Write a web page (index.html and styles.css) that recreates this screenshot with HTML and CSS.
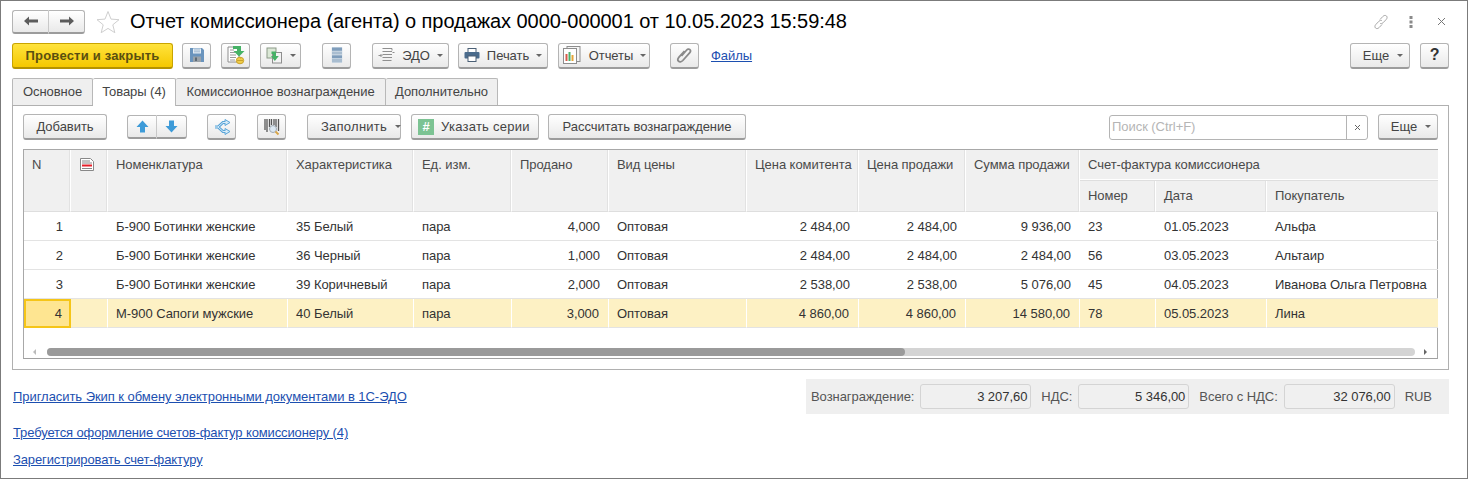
FILE: index.html
```html
<!DOCTYPE html>
<html lang="ru">
<head>
<meta charset="utf-8">
<title>Отчет комиссионера</title>
<link rel="stylesheet" href="styles.css">
</head>
<body>
<div class="window">
  <header class="titlebar">
    <div class="navgroup">
      <button class="btn seg w36"><svg width="16" height="12" viewBox="0 0 16 12"><path d="M1 6l5-4.500V4.600h9v2.800H6v3.100z" fill="#5c5c5c"/></svg></button>
      <button class="btn seg w37"><svg width="16" height="12" viewBox="0 0 16 12"><path d="M15 6l-5-4.500V4.600H1v2.800h9v3.100z" fill="#5c5c5c"/></svg></button>
    </div>
    <svg class="star" width="24" height="24" viewBox="0 0 24 24"><path d="M12 1.500l3 7.600 8 .6-6.200 5.100 2 7.900-6.800-4.300-6.800 4.300 2-7.900L1 9.700l8-.6z" fill="#fff" stroke="#cfcfcf"/></svg>
    <h1 class="title">Отчет комиссионера (агента) о продажах 0000-000001 от 10.05.2023 15:59:48</h1>
    <div class="winicons">
      <svg class="wi-link" width="16" height="16" viewBox="0 0 16 16" fill="none" stroke="#a8a8a8"><path d="M7 5.500l2.800-3c1.300-1.300 2.800-1.400 3.700-.5s.8 2.400-.5 3.700L10 8.800c-1.100 1-2.300 1.100-3 .4"/><path d="M9 10.500l-2.800 3c-1.300 1.300-2.800 1.400-3.700.5s-.8-2.400.5-3.700L6 7.200c1.100-1 2.300-1.100 3-.4"/></svg>
      <svg class="wi-dots" width="4" height="12" viewBox="0 0 4 12" fill="#8a8a8a"><rect x="0.500" y="0" width="3" height="3"/><rect x="0.500" y="4.500" width="3" height="3"/><rect x="0.500" y="9" width="3" height="3"/></svg>
      <svg width="9" height="9" viewBox="0 0 9 9" stroke="#777" fill="none"><path d="M1 1l7 7M8 1l-7 7"/></svg>
    </div>
  </header>

  <div class="cmdbar">
    <button class="btn primary w161">Провести и закрыть</button>
    <button class="btn w29 ml9"><svg width="16" height="16" viewBox="0 0 16 16"><path d="M1 1h12l2 2v12H1z" fill="#6a94bd"/><rect x="4" y="1.500" width="8" height="5" fill="#e3ecf4"/><path d="M5 3h6M5 4.800h6" stroke="#9db7cf"/><rect x="4" y="9.500" width="8" height="5.500" fill="#9aa2a9"/><rect x="6" y="10.500" width="2" height="3.500" fill="#5d6a75"/></svg></button>
    <button class="btn w29 ml10"><svg width="20" height="20" viewBox="0 0 20 20"><path d="M2 2h9l2 2v13H2z" fill="#fff" stroke="#8e8e8e"/><path d="M4 5h4M4 7.500h5M4 10h6M4 12.500h6M4 15h5" stroke="#9a9a9a"/><ellipse cx="14" cy="15.500" rx="3.700" ry="3.300" fill="#f0cd4a" stroke="#c9a22a"/><path d="M14 13h1M11 15.500h6" stroke="#c9a22a"/><path d="M7 1h8v5h3.500l-5.500 5.500L7.500 6H11V4H7z" fill="#46b266"/></svg></button>
    <button class="btn w41 ml10"><svg width="17" height="17" viewBox="0 0 17 17"><rect x="1" y="1" width="9" height="10" fill="#dbe8d6" stroke="#8b9a88"/><rect x="6.500" y="5.500" width="9" height="10.500" fill="#f3f3f3" stroke="#8e8e8e"/><path d="M3.500 3.500H8V8h2.800L6.800 13 3 8h2V6H3.500z" transform="translate(2 1)" fill="#46b266"/></svg><i class="caret"></i></button>
    <button class="btn w29 ml21"><svg width="12" height="18" viewBox="0 0 12 18"><rect x="0.500" y="1" width="11" height="16" rx="1" fill="#dfe7ee"/><rect x="1" y="1.500" width="10" height="3.300" fill="#7f9dbb"/><rect x="1" y="5.500" width="10" height="3" fill="#a9bdd0"/><rect x="1" y="9.300" width="10" height="3" fill="#7f9dbb"/><rect x="1" y="13" width="10" height="3.500" fill="#a9bdd0"/></svg></button>
    <button class="btn w77 ml21"><svg class="ic" width="17" height="16" viewBox="0 0 17 16" fill="none" stroke="#8f8f8f"><path d="M4.500 1.500h9.500v2M4.500 4.500h9.500M4.500 7.500h9.500M4.500 10.500h9.500M4.500 13.500h9"/><path d="M.5 8.500h3M2.500 7L4 8.500 2.500 10M14.500 5.500h2"/></svg>ЭДО<i class="caret"></i></button>
    <button class="btn w90 ml9"><svg class="ic" width="16" height="14" viewBox="0 0 16 14"><rect x="4" y="0.500" width="8" height="4" fill="#fff" stroke="#4a5f75"/><rect x="0.500" y="4" width="15" height="6.500" rx="1" fill="#4a6b8c"/><rect x="4" y="8" width="8" height="5.500" fill="#fff" stroke="#4a5f75"/></svg>Печать<i class="caret"></i></button>
    <button class="btn w92 ml10"><svg class="ic" width="20" height="20" viewBox="0 0 20 20"><rect x="5" y="1.500" width="13" height="15" fill="#f5f5f5" stroke="#8e8e8e"/><rect x="1.500" y="3.500" width="13" height="15" fill="#fff" stroke="#8e8e8e"/><rect x="3.500" y="9" width="2" height="7" fill="#d85a4a"/><rect x="6.500" y="7" width="2" height="9" fill="#4cb06a"/><rect x="9.500" y="10" width="2" height="6" fill="#e5a53a"/></svg>Отчеты<i class="caret"></i></button>
    <button class="btn w29 ml20"><svg width="17" height="18" viewBox="0 0 17 18" fill="none" stroke="#8a8a8a" stroke-width="1.800"><path d="M5.500 10l5.200-6c1-1.100 2.400-1.200 3.200-.4s.7 2.100-.3 3.200l-6.800 7.700c-1.500 1.600-3.300 1.700-4.300.7s-.8-2.600.5-4.100L8.500 5"/></svg></button>
    <a class="link files" href="#">Файлы</a>
    <div class="grow"></div>
    <button class="btn w60 more">Еще<i class="caret"></i></button>
    <button class="btn w29 ml10 help">?</button>
  </div>

  <nav class="tabs">
    <div class="tab t80">Основное</div>
    <div class="tab active t83">Товары (4)</div>
    <div class="tab t210">Комиссионное вознаграждение</div>
    <div class="tab t113">Дополнительно</div>
  </nav>

  <section class="panel">
    <div class="toolbar">
      <button class="btn w84">Добавить</button>
      <div class="navgroup ml20">
        <button class="btn seg w30"><svg width="13" height="13" viewBox="0 0 13 13"><path d="M6.500 0.500L12.500 7H9v5.500H4V7H.5z" fill="#3e9bd8"/></svg></button>
        <button class="btn seg w30"><svg width="13" height="13" viewBox="0 0 13 13"><path d="M6.500 12.500L12.500 6H9V.5H4V6H.5z" fill="#3e9bd8"/></svg></button>
      </div>
      <button class="btn w29 ml20"><svg width="18" height="16" viewBox="0 0 18 16" fill="none"><path d="M2 8h3l5-4.500h3M5 8l5 4.500h3" stroke="#5aa5d8" stroke-width="3"/><path d="M12 .5l5 3-5 3zM12 9.500l5 3-5 3z" fill="#d6ebf8" stroke="#5aa5d8"/><path d="M2 8h3l5-4.500h3M5 8l5 4.500h3" stroke="#d6ebf8"/></svg></button>
      <button class="btn w29 ml21"><svg width="16" height="18" viewBox="0 0 16 18"><path d="M1 1v11M3 1v13M5.500 1v8M7.500 1v6M10 1v6M12 1v8M14.500 1v12" stroke="#555" stroke-width="1.300"/><circle cx="9" cy="11" r="3.500" fill="#dce8f2" stroke="#9fa9b2"/><path d="M11.500 13.500l3 3" stroke="#d8a64a" stroke-width="2"/></svg></button>
      <button class="btn w94 ml21 start fill">Заполнить<i class="caret"></i></button>
      <button class="btn w128 ml10 start series"><span class="hash">#</span>Указать серии</button>
      <button class="btn w198 ml9">Рассчитать вознаграждение</button>
      <div class="grow"></div>
      <div class="search"><span class="search-input">Поиск (Ctrl+F)</span><span class="search-x"><svg width="7" height="7" viewBox="0 0 7 7" stroke="#666" fill="none"><path d="M1 1l5 5M6 1L1 6"/></svg></span></div>
      <button class="btn w60 more ml10">Еще<i class="caret"></i></button>
    </div>

    <div class="grid-wrap">
      <table class="grid">
        <colgroup>
          <col class="c1"><col class="c2"><col class="c3"><col class="c4"><col class="c5"><col class="c6"><col class="c7"><col class="c8"><col class="c9"><col class="c10"><col class="c11"><col class="c12"><col class="c13">
        </colgroup>
        <thead>
          <tr class="h1">
            <th rowspan="2">N</th>
            <th rowspan="2"><svg class="doc" width="14" height="13" viewBox="0 0 14 13"><path d="M.5.5h10l3 3v9H.5z" fill="#fff" stroke="#888"/><path d="M2 3h8M2 5h10M2 10.500h10" stroke="#888"/><rect x="2" y="6.500" width="10" height="2" fill="#e6202a"/></svg></th>
            <th rowspan="2">Номенклатура</th>
            <th rowspan="2">Характеристика</th>
            <th rowspan="2">Ед. изм.</th>
            <th rowspan="2">Продано</th>
            <th rowspan="2">Вид цены</th>
            <th rowspan="2">Цена комитента</th>
            <th rowspan="2">Цена продажи</th>
            <th rowspan="2">Сумма продажи</th>
            <th colspan="3" class="group">Счет-фактура комиссионера</th>
          </tr>
          <tr class="h2"><th>Номер</th><th>Дата</th><th>Покупатель</th></tr>
        </thead>
        <tbody>
          <tr><td class="r">1</td><td></td><td>Б-900 Ботинки женские</td><td>35 Белый</td><td>пара</td><td class="r">4,000</td><td>Оптовая</td><td class="r">2 484,00</td><td class="r">2 484,00</td><td class="r">9 936,00</td><td>23</td><td>01.05.2023</td><td>Альфа</td></tr>
          <tr><td class="r">2</td><td></td><td>Б-900 Ботинки женские</td><td>36 Черный</td><td>пара</td><td class="r">1,000</td><td>Оптовая</td><td class="r">2 484,00</td><td class="r">2 484,00</td><td class="r">2 484,00</td><td>56</td><td>03.05.2023</td><td>Альтаир</td></tr>
          <tr><td class="r">3</td><td></td><td>Б-900 Ботинки женские</td><td>39 Коричневый</td><td>пара</td><td class="r">2,000</td><td>Оптовая</td><td class="r">2 538,00</td><td class="r">2 538,00</td><td class="r">5 076,00</td><td>45</td><td>04.05.2023</td><td>Иванова Ольга Петровна</td></tr>
          <tr class="sel"><td class="r cur">4</td><td></td><td>М-900 Сапоги мужские</td><td>40 Белый</td><td>пара</td><td class="r">3,000</td><td>Оптовая</td><td class="r">4 860,00</td><td class="r">4 860,00</td><td class="r">14 580,00</td><td>78</td><td>05.05.2023</td><td>Лина</td></tr>
        </tbody>
      </table>
      <div class="hscroll">
        <i class="arr-l"></i>
        <div class="track"><div class="thumb"></div></div>
        <i class="arr-r"></i>
      </div>
    </div>
  </section>

  <footer class="bottom">
    <div class="bottom-row">
      <a class="link" href="#">Пригласить Экип к обмену электронными документами в 1С-ЭДО</a>
      <div class="totals">
        <span class="lbl">Вознаграждение:</span><span class="field">3 207,60</span>
        <span class="lbl">НДС:</span><span class="field">5 346,00</span>
        <span class="lbl">Всего с НДС:</span><span class="field">32 076,00</span>
        <span class="lbl">RUB</span>
      </div>
    </div>
    <a class="link l2" href="#">Требуется оформление счетов-фактур комиссионеру (4)</a>
    <a class="link l3" href="#">Зарегистрировать счет-фактуру</a>
  </footer>
</div>
</body>
</html>
```

FILE: styles.css
```css
* { box-sizing: border-box; }
html, body { margin: 0; padding: 0; background: #fff; }
body { font-family: "Liberation Sans", Arial, sans-serif; font-size: 13px; color: #333; letter-spacing: -0.05px; }
.window { width: 1468px; height: 479px; border: 1px solid #7b7b7b; padding: 0 18px 0 11px; overflow: hidden; }

.titlebar { display: flex; align-items: center; height: 40px; padding-top: 1px; }
.navgroup { display: flex; }
.star { margin-left: 11px; }
.title { font-size: 20px; font-weight: 400; color: #000; margin: 0 0 0 10px; letter-spacing: -0.06px; white-space: nowrap; }
.winicons { margin-left: auto; display: flex; align-items: center; margin-right: 3px; }
.wi-link { margin-right: 20px; }
.wi-dots { margin-right: 24px; }

.btn { font: inherit; letter-spacing: inherit; color: #444; height: 26px; border: 1px solid #b4b4b4; border-bottom: 2px solid #9c9c9c; border-radius: 3px; background: linear-gradient(#fff, #e9e9e9); display: inline-flex; align-items: center; justify-content: center; padding: 0; flex: none; }
.seg { height: 24px; border-radius: 0; }
.seg:first-child { border-radius: 3px 0 0 3px; border-right: 1px solid #c8c8c8; }
.seg:last-child { border-radius: 0 3px 3px 0; border-left: 0; }
.w29 { width: 29px; } .w30 { width: 30px; } .w36 { width: 37px; } .w37 { width: 36px; }
.w41 { width: 41px; } .w60 { width: 60px; } .w77 { width: 77px; } .w84 { width: 84px; }
.w90 { width: 90px; } .w92 { width: 92px; } .w94 { width: 94px; } .w128 { width: 128px; }
.w161 { width: 161px; } .w198 { width: 198px; }
.ml9 { margin-left: 9px; } .ml10 { margin-left: 10px; } .ml20 { margin-left: 20px; } .ml21 { margin-left: 21px; }
.primary { background: linear-gradient(#ffe33d, #f5c800); border-color: #c9a400; border-bottom-color: #b59300; font-weight: 700; color: #5a4f10; letter-spacing: 0.2px; }
.caret { display: inline-block; width: 0; height: 0; border: 3px solid transparent; border-top: 3px solid #666; border-bottom: 0; margin-left: 7px; }
.ic { margin-right: 7px; }
.more { padding-left: 6px; }
.more .caret { margin-left: 8px; }
.start { justify-content: flex-start; }
.fill { padding-left: 13px; letter-spacing: 0.25px; }
.fill .caret { margin-left: 8px; }
.series { padding-left: 6px; letter-spacing: 0.25px; }
.help { font-size: 16px; font-weight: 700; color: #333; }
.cmdbar { display: flex; align-items: center; height: 27px; margin-top: 1px; }
.link { color: #1c4fb0; text-decoration: underline; white-space: nowrap; }
.files { margin-left: 12px; }
.grow { flex: 1; }

.tabs { display: flex; margin-top: 9px; height: 28px; position: relative; z-index: 1; }
.tab { height: 27px; padding-bottom: 2px; background: #efefef; border: 1px solid #b8b8b8; border-bottom: 0; border-left: 0; display: flex; align-items: center; justify-content: center; color: #444; border-radius: 2px 2px 0 0; }
.tab:first-child { border-left: 1px solid #b8b8b8; }
.tab.active { background: #fff; height: 28px; padding-bottom: 3px; }
.t80 { width: 81px; } .t83 { width: 83px; } .t210 { width: 210px; } .t113 { width: 112px; }

.panel { margin-top: -1px; height: 265px; border: 1px solid #b0b0b0; padding: 8px 10px 0; }
.toolbar { display: flex; align-items: center; height: 26px; }
.search { width: 259px; height: 25px; border: 1px solid #b4b4b4; border-radius: 3px; display: flex; background: #fff; }
.search-input { flex: 1; color: #b5b5b5; padding: 0 0 1px 2px; display: flex; align-items: center; }
.search-x { width: 21px; border-left: 1px solid #b4b4b4; display: flex; align-items: center; justify-content: center; }
.hash { width: 16px; height: 16px; background: #7cc393; color: #fff; font-weight: 700; font-size: 13px; display: inline-flex; align-items: center; justify-content: center; margin-right: 7px; letter-spacing: 0; }

.grid-wrap { margin-top: 9px; height: 210px; border: 1px solid #a8a8a8; border-bottom-color: #a0a0a0; position: relative; }
.grid { border-collapse: separate; border-spacing: 0; table-layout: fixed; width: 1414px; }
.c1 { width: 47px; } .c2 { width: 37px; } .c3 { width: 180px; } .c4 { width: 126px; } .c5 { width: 98px; } .c6 { width: 97px; }
.c7 { width: 138px; } .c8 { width: 112px; } .c9 { width: 107px; } .c10 { width: 114px; } .c11 { width: 76px; } .c12 { width: 111px; } .c13 { width: 171px; }
th { background: #f0f0f0; font-weight: 400; color: #4a4a4a; text-align: left; vertical-align: top; padding: 7px 8px 0; border-right: 1px solid #fff; border-bottom: 1px solid #dedede; height: 31px; box-shadow: inset -1px 0 0 #e2e2e2; white-space: nowrap; }
th:last-child { border-right: 0; box-shadow: none; }
.h1 th { height: 31px; }
.h1 th[rowspan] { height: 62px; }
.h1 .group { box-shadow: inset 0 -1px 0 #fff; }
.doc { display: block; margin: 1px 0 0 1px; }
td { height: 29px; padding: 1px 8px 0; border-bottom: 1px solid #e3e3e3; white-space: nowrap; color: #333; overflow: hidden; }
.r { text-align: right; padding-right: 9px; }
td.r:first-child { padding-right: 8px; }
.sel td { background: #fdf1c4; border-right: 1px solid #fff; }
.sel td:last-child { border-right: 0; }
.sel .cur { background: #fee591; outline: 2px solid #f5c518; outline-offset: -2px; }

.hscroll { position: absolute; left: 0; right: 0; bottom: 2px; height: 9px; display: flex; align-items: center; padding: 0 10px 0 9px; }
.arr-l { width: 0; height: 0; border: 3px solid transparent; border-right: 3px solid #bbb; border-left: 0; }
.arr-r { width: 0; height: 0; border: 3px solid transparent; border-left: 3px solid #666; border-right: 0; margin-left: 9px; }
.track { flex: 1; height: 8px; border-radius: 4px; background: #d4d4d4; margin-left: 11px; }
.thumb { width: 858px; height: 8px; border-radius: 4px; background: #9a9a9a; }

.bottom { margin-top: 9px; }
.bottom-row { display: flex; justify-content: space-between; align-items: center; height: 35px; padding-left: 1px; }
.totals { width: 643px; height: 35px; background: #efefef; display: flex; align-items: center; padding: 0 17px 0 5px; gap: 6px; }
.lbl { color: #555; margin-left: 4px; white-space: nowrap; }
.lbl:first-child { margin-left: 0; }
.field { width: 111px; height: 25px; border: 1px solid #d4d4d4; border-radius: 3px; background: #f0f0f0; display: flex; align-items: center; justify-content: flex-end; padding-right: 3px; color: #333; }
.l2 { display: block; margin: 12px 0 0 1px; line-height: 14px; letter-spacing: -0.13px; }
.l3 { display: block; margin: 13px 0 0 1px; line-height: 14px; letter-spacing: -0.12px; }
```
